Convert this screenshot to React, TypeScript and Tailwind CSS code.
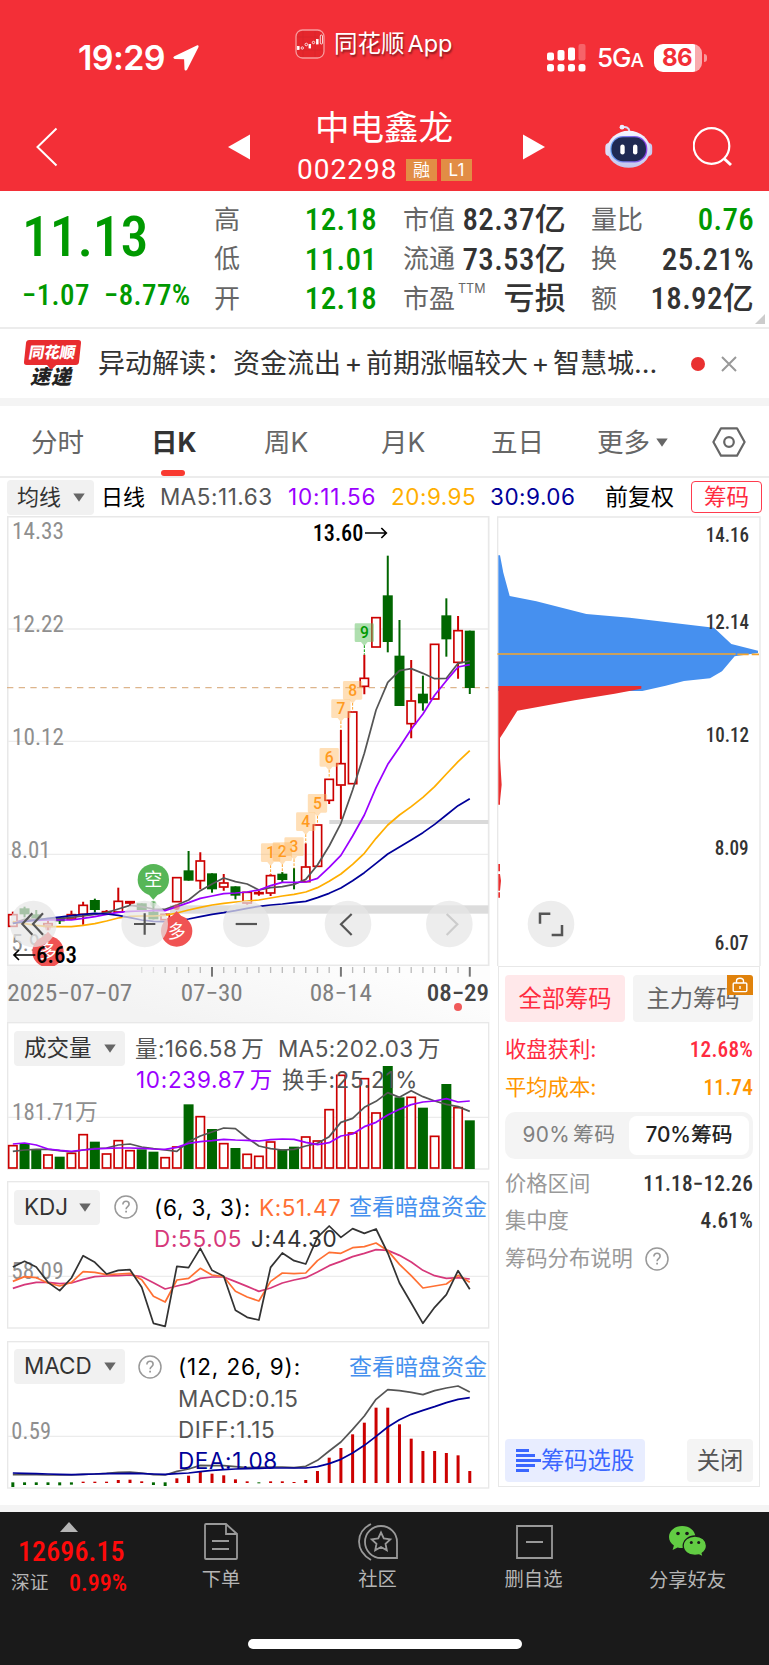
import React from 'react';
import clsx from 'clsx';

const UI = "[font-family:Inter,'Noto_Sans_CJK_SC',sans-serif]";
const DIN = "[font-family:Roboto,'Noto_Sans_CJK_SC',sans-serif] [font-stretch:75%]";
const DIN_SVG = "Roboto, 'Noto Sans CJK SC', sans-serif";

const RED = '#cc0000';
const GREEN = '#006600';

// x of the n-th trading day, in chart units (3 units = 1px)
const dayX = (i: number) => 38.5 + i * 35.15;

// [rising, body top, body bottom, high, low]
type Candle = [boolean, number, number, number, number];

const candles: Candle[] = [
  [true, 1213, 1250, 1205, 1250],
  [false, 1195, 1213, 1190, 1222],
  [false, 1213, 1225, 1200, 1232],
  [true, 1240, 1250, 1232, 1260],
  [false, 1222, 1234, 1222, 1242],
  [true, 1213, 1228, 1202, 1228],
  [true, 1185, 1214, 1175, 1244],
  [false, 1170, 1200, 1166, 1207],
  [true, 1204, 1208, 1200, 1208],
  [true, 1173, 1207, 1133, 1207],
  [true, 1174, 1180, 1174, 1187],
  [false, 1180, 1200, 1180, 1200],
  [false, 1205, 1228, 1175, 1228],
  [true, 1212, 1230, 1212, 1230],
  [true, 1102, 1176, 1102, 1176],
  [false, 1081, 1112, 1023, 1112],
  [true, 1052, 1113, 1027, 1138],
  [false, 1090, 1138, 1090, 1148],
  [true, 1118, 1132, 1092, 1142],
  [false, 1129, 1157, 1129, 1168],
  [true, 1146, 1180, 1146, 1184],
  [true, 1147, 1152, 1143, 1157],
  [true, 1096, 1150, 1092, 1158],
  [false, 1091, 1110, 1086, 1118],
  [false, 1103, 1105, 1074, 1138],
  [true, 1070, 1116, 1000, 1116],
  [true, 944, 1070, 944, 1070],
  [true, 807, 872, 807, 882],
  [true, 760, 826, 660, 928],
  [true, 605, 822, 605, 822],
  [true, 504, 530, 434, 553],
  [true, 322, 412, 322, 412],
  [false, 256, 396, 137, 427],
  [false, 437, 588, 330, 588],
  [true, 572, 642, 450, 685],
  [false, 551, 580, 497, 602],
  [true, 402, 568, 402, 568],
  [false, 316, 388, 265, 440],
  [true, 361, 458, 318, 506],
  [false, 362, 534, 362, 552],
];

const ma5 = [1240, 1228, 1228, 1228, 1226, 1222, 1218, 1213, 1208, 1197, 1186, 1190, 1197, 1198, 1185, 1170, 1142, 1122, 1104, 1115, 1122, 1140, 1133, 1130, 1123, 1108, 1065, 1008, 940, 840, 730, 600, 517, 482, 476, 490, 506, 505, 460, 453];
const ma10 = [1236, 1233, 1231, 1230, 1230, 1230, 1225, 1220, 1213, 1207, 1204, 1203, 1202, 1202, 1190, 1178, 1165, 1158, 1151, 1149, 1146, 1140, 1127, 1117, 1117, 1116, 1105, 1072, 1036, 978, 915, 833, 763, 712, 658, 612, 556, 512, 471, 464];
const ma20 = [1235, 1241, 1246, 1250, 1250, 1250, 1246, 1241, 1233, 1224, 1219, 1218, 1218, 1216, 1209, 1200, 1192, 1185, 1180, 1176, 1173, 1170, 1164, 1158, 1153, 1146, 1133, 1114, 1092, 1063, 1030, 985, 945, 915, 890, 862, 830, 792, 755, 722];
const ma30 = [1240, 1235, 1230, 1225, 1221, 1217, 1213, 1210, 1212, 1216, 1223, 1230, 1234, 1235, 1232, 1227, 1220, 1213, 1208, 1202, 1195, 1189, 1185, 1182, 1178, 1174, 1163, 1150, 1134, 1112, 1088, 1060, 1032, 1011, 990, 968, 943, 915, 887, 866];

const volume = [405, 400, 420, 433, 440, 428, 372, 395, 430, 390, 420, 418, 425, 441, 409, 283, 318, 357, 399, 414, 431, 437, 394, 418, 410, 379, 391, 297, 194, 367, 204, 307, 168, 262, 260, 293, 377, 222, 291, 331];
const vol5 = [424, 420, 418, 418, 422, 426, 420, 415, 414, 405, 402, 411, 416, 420, 424, 395, 378, 366, 354, 356, 384, 408, 416, 420, 418, 408, 400, 380, 337, 325, 292, 274, 248, 262, 242, 260, 273, 283, 290, 304];
const vol10 = [402, 399, 405, 417, 421, 424, 420, 417, 415, 414, 414, 415, 417, 418, 412, 400, 395, 392, 388, 390, 391, 393, 389, 387, 388, 397, 404, 398, 378, 372, 350, 337, 315, 298, 284, 276, 273, 266, 276, 273];

const kLine = [815, 801, 804, 820, 829, 818, 786, 788, 795, 793, 791, 810, 860, 877, 811, 806, 776, 796, 801, 845, 862, 874, 815, 790, 792, 790, 753, 728, 731, 714, 711, 700, 723, 764, 798, 835, 829, 823, 797, 818];
const dLine = [836, 825, 818, 818, 822, 820, 809, 801, 799, 798, 796, 801, 819, 838, 829, 821, 806, 802, 802, 816, 830, 845, 835, 820, 811, 804, 787, 768, 755, 741, 731, 720, 722, 737, 757, 782, 798, 806, 804, 808];
const jLine = [772, 755, 772, 818, 843, 805, 738, 758, 793, 782, 780, 833, 941, 950, 770, 774, 716, 782, 800, 902, 923, 931, 773, 730, 753, 763, 683, 649, 683, 657, 671, 658, 730, 820, 880, 941, 893, 855, 783, 839];

const diff = [1393, 1393, 1393, 1394, 1394, 1394, 1392, 1391, 1389, 1386, 1385, 1388, 1393, 1394, 1383, 1376, 1365, 1366, 1366, 1369, 1372, 1371, 1370, 1370, 1372, 1368, 1350, 1322, 1295, 1257, 1217, 1167, 1138, 1141, 1146, 1153, 1141, 1133, 1127, 1145];
const dea = [1388, 1389, 1390, 1391, 1392, 1393, 1392, 1391, 1390, 1390, 1389, 1390, 1391, 1392, 1390, 1388, 1384, 1380, 1378, 1376, 1375, 1374, 1373, 1373, 1373, 1373, 1369, 1360, 1347, 1328, 1305, 1278, 1250, 1228, 1212, 1200, 1189, 1177, 1167, 1162];
// height above the zero line, negative goes below
const macdBars = [-14, -8, -8, -8, -9, -7, 4, 4, 4, 9, 10, 5, -8, -11, 14, 22, 33, 28, 23, 11, 5, -3, 5, 5, 3, 9, 36, 76, 105, 146, 181, 226, 226, 176, 133, 96, 96, 90, 83, 36];

const points = (ys: number[]) => ys.map((y, i) => `${dayX(i)},${y}`).join(' ');

const Line = ({ ys, color }: { ys: number[]; color: string }) => (
  <polyline points={points(ys)} fill="none" stroke={color} strokeWidth={5.2} strokeLinejoin="round" />
);

const tags = [
  { n: 1, day: 22, y: 1000, end: 1094 },
  { n: 2, day: 23, y: 997, end: 1088 },
  { n: 3, day: 24, y: 982, end: 1076 },
  { n: 4, day: 25, y: 907, end: 1000 },
  { n: 5, day: 26, y: 852, end: 942 },
  { n: 6, day: 27, y: 714, end: 806 },
  { n: 7, day: 28, y: 568, end: 660 },
  { n: 8, day: 29, y: 513, end: 604 },
  { n: 9, day: 30, y: 340, end: 434 },
];

const AxisLabel = ({ x, y, w, children, fill = '#8f8f8f', weight = 400, size = 69 }: { x: number; y: number; w: number; children: string; fill?: string; weight?: number; size?: number }) => (
  <text x={x} y={y} textLength={w} lengthAdjust="spacingAndGlyphs" fontSize={size} fontWeight={weight} fontStretch="75%" fill={fill} fontFamily={DIN_SVG}>
    {children}
  </text>
);

const Caret = ({ className }: { className?: string }) => (
  <svg viewBox="0 0 12 9" className={clsx('h-[9px] w-3', className)}>
    <path d="M0.3 0.5h11.4L6 8.7z" fill="#666" />
  </svg>
);

const Help = () => (
  <svg viewBox="0 0 24 24" className="h-6 w-6 shrink-0" fill="none" stroke="#999">
    <circle cx="12" cy="12" r="11" strokeWidth="1.5" />
    <path d="M8.9 9.4c0-1.9 1.3-3.1 3.1-3.1s3.1 1.2 3.1 2.9c0 2.3-3 2.4-3 5" strokeWidth="1.6" />
    <path d="M12.1 15.8v1.8" strokeWidth="1.8" />
  </svg>
);

const StatusBar = () => (
  <div className="flex h-[84px] text-white">
    <div className="flex w-[295px] items-center pt-[31px] pl-[78px]">
      <span className="w-[95px] text-[34px] leading-none font-semibold tracking-[-0.6px]">19:29</span>
      <svg viewBox="0 0 26 26" className="h-[26px] w-[26px]">
        <path d="M23.8.4 1.4 11.2c-1.7.9-1.2 2.6.5 2.7l9.2.3.4 9.7c.1 1.900 2 2 2.700.5L25.300 2.600C26.100.9 25.200-.2 23.800.4z" fill="#fff" />
      </svg>
    </div>
    <div className="flex w-[252px] items-center pt-1">
      <svg viewBox="0 0 30 30" className="h-[30px] w-[30px]">
        <rect x="1" y="1" width="28" height="28" rx="6.5" fill="#e5262c" stroke="#f79a9c" strokeWidth="1.3" />
        <path d="M2 8h26M2 21h26M8 2v26M20 2v26" stroke="#d5262c" strokeWidth=".6" />
        <g fill="#fff" stroke="#fff" strokeWidth=".8">
          <rect x="2.3" y="17.5" width="1.8" height="3" />
          <circle cx="7.3" cy="19" r="1.2" fill="none" />
          <circle cx="11.3" cy="15.5" r="1.3" fill="none" />
          <rect x="14" y="15.5" width="1.6" height="3.5" />
          <circle cx="18.5" cy="13.5" r="1.2" fill="none" />
          <rect x="21.5" y="10.5" width="1.6" height="4.5" />
          <rect x="25.3" y="6" width="2.2" height="9" rx="1" fill="none" />
        </g>
      </svg>
      <span className="ml-[9px] text-[23.5px] leading-none whitespace-nowrap [text-shadow:1px_2px_2px_rgba(0,0,0,0.45)]">
        同花顺<span className="ml-[3px]">App</span>
      </span>
    </div>
    <div className="flex items-center pt-[31px]">
      <svg viewBox="0 0 39 28" className="h-7 w-[39px]" fill="#fff">
        <rect x="0" y="8.5" width="7" height="8" rx="2" />
        <rect x="10.5" y="6" width="7" height="10.5" rx="2" />
        <rect x="21" y="3.5" width="7" height="13" rx="2" />
        <rect x="31.5" y="0" width="7" height="16.5" rx="2" opacity=".25" />
        {[0, 10.5, 21, 31.5].map((x) => (
          <rect key={x} x={x} y="20" width="7" height="7.5" rx="2.5" />
        ))}
      </svg>
      <span className="ml-[11px] w-[57px] pt-[1px] text-[26px] leading-none font-medium tracking-[-1px]">
        5G<span className="text-[19px]">A</span>
      </span>
      <div className="flex h-7 w-[48px] items-center justify-center rounded-[9px] bg-[linear-gradient(90deg,#fff_86%,#f9aaae_86%)]">
        <span className="pr-0.5 text-[24px] leading-none font-bold tracking-[-0.5px] text-[#f22f37]">86</span>
      </div>
      <div className="ml-[1.5px] h-2 w-[3px] rounded-r-full bg-[#f9979b]" />
    </div>
  </div>
);

const Robot = () => (
  <svg viewBox="0 0 48 46" className="h-[46px] w-12">
    <defs>
      <linearGradient id="shell" x1="0" y1="0" x2="0" y2="1">
        <stop offset="0" stopColor="#f4f5ff" />
        <stop offset="1" stopColor="#c3c6ee" />
      </linearGradient>
      <linearGradient id="visor" x1="0" y1="0" x2="1" y2="0">
        <stop offset="0" stopColor="#6aa5f5" />
        <stop offset="1" stopColor="#8b3fe6" />
      </linearGradient>
    </defs>
    <path d="M18 4.200c3-.6 6 .3 6.500 4.300" fill="none" stroke="#dadcf7" strokeWidth="2" />
    <circle cx="17" cy="4.200" r="2.400" fill="#eceeff" />
    <rect x="0.300" y="20" width="8" height="13" rx="4" fill="#dcdef8" />
    <rect x="39.200" y="20" width="8" height="13" rx="4" fill="#c9cbf1" />
    <ellipse cx="23.700" cy="26.300" rx="21.500" ry="18.500" fill="url(#shell)" />
    <rect x="5.300" y="13" width="37" height="26.500" rx="12.500" fill="url(#visor)" />
    <rect x="6.500" y="14.200" width="34.500" height="24" rx="11.500" fill="#1f2a52" />
    <rect x="15.300" y="21.500" width="4.400" height="10" rx="2.200" fill="#fff" />
    <rect x="28" y="21.500" width="4.400" height="10" rx="2.200" fill="#fff" />
  </svg>
);

const TitleBar = () => (
  <div className="flex h-[107px] items-start text-white">
    <svg viewBox="0 0 22 40" className="mt-[43px] ml-9 h-10 w-[22px]" fill="none" stroke="#fff" strokeWidth="2">
      <path d="M20.5 1.5 1.5 20l19 18.5" />
    </svg>
    <svg viewBox="0 0 22 26" className="mt-[50px] ml-[170px] h-[26px] w-[22px]">
      <path d="M22 .5v25L0 13z" fill="#fff" />
    </svg>
    <div className="mt-[26px] ml-[47px] w-[176px]">
      <h1 className="pl-[18px] text-[34.5px] leading-9 whitespace-nowrap">中电鑫龙</h1>
      <div className="mt-[13px] flex items-center">
        <span className="w-[109px] [font-family:Roboto,sans-serif] text-[28px] leading-[22px] tracking-[1px]">002298</span>
        <span className="flex h-[22px] w-[31px] items-center justify-center bg-[#e28d45] text-[17px] leading-none">融</span>
        <span className="ml-1 flex h-[22px] w-[31px] items-center justify-center bg-[#e28d45] text-[17px] leading-none">L1</span>
      </div>
    </div>
    <svg viewBox="0 0 22 26" className="mt-[50px] ml-[50px] h-[26px] w-[22px]">
      <path d="M0 .5v25L22 13z" fill="#fff" />
    </svg>
    <div className="mt-[39px] ml-[60px]">
      <Robot />
    </div>
    <svg viewBox="0 0 40 40" className="mt-[43px] ml-[40px] h-10 w-10" fill="none" stroke="#fff">
      <circle cx="18.5" cy="19" r="17.8" strokeWidth="2.2" />
      <path d="m31 31.500 7 6.500" strokeWidth="3" />
    </svg>
  </div>
);

const Stat = ({ label, value, green, sup }: { label: string; value: string; green?: boolean; sup?: string }) => (
  <div className="flex h-[39.5px] items-center justify-between whitespace-nowrap">
    <span className="flex text-[26px] leading-none text-[#666]">
      {label}
      {sup && <sup className="top-0 mt-[-3px] ml-[3px] text-[12.5px] leading-none">{sup}</sup>}
    </span>
    <span className={clsx('text-[31px] leading-none font-medium tracking-[0.3px]', DIN, green ? 'text-[#009900]' : 'text-[#333]')}>{value}</span>
  </div>
);

const Quote = () => (
  <section className="relative flex h-[138px] border-b-2 border-[#ececec] bg-white">
    <div className={`w-[214px] pt-[17px] pl-[22px] text-[#009900] ${DIN}`}>
      <div className="text-[56px] leading-[58px] font-medium tracking-[-0.3px]">11.13</div>
      <div className="mt-[15px] flex text-[29px] leading-[28px] font-medium tracking-[0.4px]">
        <span className="w-[82px]">−1.07</span>
        <span>−8.77%</span>
      </div>
    </div>
    <div className="w-[163px] pt-[9px]">
      <Stat label="高" value="12.18" green />
      <Stat label="低" value="11.01" green />
      <Stat label="开" value="12.18" green />
    </div>
    <div className="ml-[26px] w-[163px] pt-[9px]">
      <Stat label="市值" value="82.37亿" />
      <Stat label="流通" value="73.53亿" />
      <Stat label="市盈" value="亏损" sup="TTM" />
    </div>
    <div className="ml-[25px] w-[163px] pt-[9px]">
      <Stat label="量比" value="0.76" green />
      <Stat label="换" value="25.21%" />
      <Stat label="额" value="18.92亿" />
    </div>
    <svg viewBox="0 0 10 10" className="absolute right-1 bottom-[3px] h-2.5 w-2.5">
      <path d="M10 0v10H0z" fill="#ccc" />
    </svg>
  </section>
);

const Plus = () => <span className="inline-block w-[25px] text-center">+</span>;

const News = () => (
  <section className="flex h-[77px] items-center border-b-8 border-[#f4f4f4] bg-white">
    <div className="ml-6 flex w-[74px] flex-col items-start">
      <div className="relative ml-[1px] flex h-[25px] w-[55px] -skew-x-6 items-center justify-center rounded-[3px] bg-[#e82c2f]">
        <span className="[transform:skewX(-4deg)] text-[15.5px] leading-none font-black whitespace-nowrap text-white">同花顺</span>
        <span className="absolute -bottom-[3px] left-[24px] h-2 w-2 rotate-45 bg-[#e82c2f]" />
      </div>
      <span className="mt-[2px] ml-[6px] text-[20px] leading-[21px] font-black tracking-[1px] text-[#222] italic">速递</span>
    </div>
    <p className="w-[586px] text-[27px] leading-none whitespace-nowrap text-[#333]">
      异动解读：资金流出
      <Plus />
      前期涨幅较大
      <Plus />
      智慧城...
    </p>
    <span className="ml-[7px] h-3.5 w-3.5 rounded-full bg-[#e93030]" />
    <svg viewBox="0 0 16 16" className="ml-4 h-4 w-4" stroke="#999" strokeWidth="2">
      <path d="m1 1 14 14M15 1 1 15" />
    </svg>
  </section>
);

const Tabs = () => (
  <nav className="flex h-[72px] items-center border-b-2 border-[#ececec] bg-white pt-[2px] text-[26.5px] leading-none whitespace-nowrap text-[#666]">
    <span className="ml-[31px] w-[120px]">分时</span>
    <span className="relative flex h-full w-[113px] items-center font-bold text-[#333]">
      日K
      <i className="absolute bottom-0 left-[10px] h-[6px] w-6 rounded-[3px] bg-[#f93a30]" />
    </span>
    <span className="w-[117px]">周K</span>
    <span className="w-[110px]">月K</span>
    <span className="w-[106px]">五日</span>
    <span className="w-[59px]">更多</span>
    <Caret />
    <svg viewBox="0 0 34 30" className="ml-[44px] h-[30px] w-[34px]" fill="none" stroke="#666" strokeWidth="2.2">
      <path d="M9 1.300h16L32.600 15 25 28.700H9L1.400 15z" strokeLinejoin="round" />
      <circle cx="17" cy="15" r="4.8" />
    </svg>
  </nav>
);

const MaRow = () => (
  <div className="flex h-[38px] items-center bg-white pl-[7px] text-[22.5px] leading-none whitespace-nowrap">
    <span className="flex h-[35px] w-[87px] items-center justify-between rounded-[4px] bg-[#f1f1f1] pr-[9px] pl-[10px] text-[22px] text-[#333]">
      均线
      <Caret />
    </span>
    <span className="ml-[7px] w-[59px] text-[22px] text-black">日线</span>
    <span className="w-[128px] tracking-[0.5px] text-[#555]">MA5:11.63</span>
    <span className="w-[103px] tracking-[0.8px] text-[#9b00ff]">10:11.56</span>
    <span className="w-[99px] tracking-[0.5px] text-[#ffae00]">20:9.95</span>
    <span className="w-[115px] tracking-[0.5px] text-[#000099]">30:9.06</span>
    <span className="w-[86px] text-[23px] text-black">前复权</span>
    <span className="flex h-8 w-[71px] items-center justify-center rounded-[4px] border-[1.5px] border-[#ff3b4e] text-[22.5px] text-[#ff2b40]">筹码</span>
  </div>
);

const Pin = ({ x, y, color, down, label }: { x: number; y: number; color: string; down?: boolean; label: string }) => (
  <g>
    <circle cx={x} cy={y} r={47} fill={color} />
    <path d={down ? `M${x - 20} ${y + 38}h40l-20 22z` : `M${x - 20} ${y - 38}h40l-20 -22z`} fill={color} />
    <circle cx={x} cy={down ? y + 72 : y - 72} r={9} fill={color} opacity={0.5} />
    <text x={x} y={y + 20} textAnchor="middle" fontSize={54} fill="#fff" fontFamily="'Noto Sans CJK SC', sans-serif">
      {label}
    </text>
  </g>
);

const buttons = [
  { x: 100, icon: 'M97 1210l-30 32 30 32M129 1210l-30 32 30 32', stroke: '#555' },
  { x: 434, icon: 'M402 1242h64M434 1210v64', stroke: '#555' },
  { x: 739, icon: 'M707 1242h64', stroke: '#555' },
  { x: 1044, icon: 'M1055 1212l-32 31 32 32', stroke: '#555' },
  { x: 1348, icon: 'M1340 1212l32 31-32 32', stroke: '#ccc' },
];

const KLineChart = () => (
  <svg viewBox="21 18 1449 1350" className="h-[450px] w-[483px]">
    <rect x={23} y={20} width={1443} height={1346} fill="#fff" stroke="#e8e8e8" strokeWidth={5} />
    <path d="M24 357H1464M24 694H1464M24 1033H1464" stroke="#ececec" strokeWidth={4} />
    <rect x={988} y={930} width={477} height={12} fill="#d9d9d9" />
    <rect x={510} y={1186} width={955} height={25} fill="#dcdcdc" />
    <AxisLabel x={36} y={88} w={156}>14.33</AxisLabel>
    <AxisLabel x={36} y={367} w={156}>12.22</AxisLabel>
    <AxisLabel x={36} y={705} w={156}>10.12</AxisLabel>
    <AxisLabel x={32} y={1043} w={120}>8.01</AxisLabel>
    <AxisLabel x={34} y={1323} w={120}>5.90</AxisLabel>
    <path d="M21 533H1466" stroke="#ddb58c" strokeWidth={3.5} strokeDasharray="19 16" />
    {candles.map(([up, top, bottom, high, low], i) => {
      const x = dayX(i);
      return up ? (
        <g key={i} stroke={RED} strokeWidth={5}>
          <path d={`M${x} ${high}V${top}M${x} ${bottom}V${low}`} strokeWidth={6} />
          <rect x={x - 12.5} y={top + 1} width={25} height={Math.max(bottom - top - 2, 1)} fill="#fff" />
        </g>
      ) : (
        <g key={i} fill={GREEN}>
          <rect x={x - 3} y={high} width={6} height={low - high} />
          {bottom - top > 5 && <rect x={x - 15} y={top} width={30} height={bottom - top} />}
        </g>
      );
    })}
    <Line ys={ma5} color="#555" />
    <Line ys={ma10} color="#9b00ff" />
    <Line ys={ma20} color="#ffae00" />
    <Line ys={ma30} color="#000099" />
    {tags.map(({ n, day, y, end }) => {
      const x = dayX(day);
      const green = n === 9;
      return (
        <g key={n}>
          <path d={`M${x - 25} ${y}h50q4 0 4 4v48q0 4 -4 4h-15l-10 12l-10 -12h-15q-4 0 -4 -4v-48q0 -4 4 -4z`} fill={green ? '#5fbf5f' : '#ffb860'} opacity={green ? 0.5 : 0.45} />
          <path d={`M${x} ${y + 66}V${end}`} stroke={green ? '#009900' : '#ffa530'} strokeWidth={3} strokeDasharray="8 4" />
          <text x={x} y={y + 45} textAnchor="middle" fontSize={47} fontWeight={500} fill={green ? '#009900' : '#ff9a1f'} fontFamily={DIN_SVG}>
            {n}
          </text>
        </g>
      );
    })}
    <Pin x={460} y={1109} color="#57b657" down label="空" />
    <Pin x={530} y={1263} color="#f05353" label="多" />
    <Pin x={144} y={1325} color="#f05353" label="多" />
    {buttons.map(({ x, icon, stroke }) => (
      <g key={x}>
        <circle cx={x} cy={1242} r={70} fill="#e6e6e6" opacity={0.72} />
        <path d={icon} fill="none" stroke={stroke} strokeWidth={6.5} />
      </g>
    ))}
    <AxisLabel x={938} y={93} w={152} fill="#000" weight={500}>13.60</AxisLabel>
    <path d="M1095 69h64M1144 54l15 15-15 15" fill="none" stroke="#000" strokeWidth={5} />
    <path d="M106 1335H42M57 1320l-15 15 15 15" fill="none" stroke="#000" strokeWidth={5} />
    <AxisLabel x={108} y={1360} w={123} fill="#000" weight={500}>6.63</AxisLabel>
  </svg>
);

const DateAxis = () => (
  <svg viewBox="21 1368 1449 168" className="h-14 w-[483px]">
    <defs>
      <linearGradient id="axis" x1="0" y1="1" x2="1" y2="0.6">
        <stop offset="0.3" stopColor="#f3f3f3" />
        <stop offset="1" stopColor="#fdfdfd" />
      </linearGradient>
    </defs>
    <rect x={21} y={1368} width={1449} height={168} fill="url(#axis)" />
    {Array.from({ length: 29 }, (_, k) => k + 11).map((i) => {
      const major = i === 17 || i === 28 || i === 39;
      return <path key={i} d={`M${dayX(i)} 1371V${major ? 1400 : 1389}`} stroke={major ? '#777' : i < 13 ? '#ddd' : '#bbb'} strokeWidth={major ? 6 : 4} />;
    })}
    <AxisLabel x={22} y={1474} w={375} fill="#808080">2025−07−07</AxisLabel>
    <AxisLabel x={542} y={1474} w={186} fill="#808080">07−30</AxisLabel>
    <AxisLabel x={929} y={1474} w={187} fill="#808080">08−14</AxisLabel>
    <AxisLabel x={1280} y={1474} w={187} fill="#444" weight={500}>08−29</AxisLabel>
    <circle cx={1374} cy={1491} r={12} fill="#f05a5a" />
  </svg>
);

const Picker = ({ children, className }: { children: string; className: string }) => (
  <span className={clsx('flex h-[35px] shrink-0 items-center justify-between rounded-[4px] bg-[#f1f1f1] pr-[9px] pl-[10px] text-[22.5px] tracking-normal text-[#333]', className)}>
    {children}
    <Caret />
  </span>
);

const VolumePanel = () => (
  <div className="relative h-[148px] w-[483px] text-[22.5px] leading-none tracking-[0.4px] whitespace-nowrap text-[#555]">
    <svg viewBox="21 36 1449 444" className="absolute inset-0 h-full w-full">
      <rect x={23} y={38} width={1443} height={439} fill="#fff" stroke="#e8e8e8" strokeWidth={4} />
      <path d="M24 322H1464" stroke="#ececec" strokeWidth={4} />
      {volume.map((y, i) =>
        candles[i][0] ? (
          <rect key={i} x={dayX(i) - 12.5} y={y + 2} width={25} height={472 - y} fill="#fff" stroke={RED} strokeWidth={5} />
        ) : (
          <rect key={i} x={dayX(i) - 15} y={y} width={30} height={477 - y} fill={GREEN} />
        ),
      )}
      <Line ys={vol5} color="#555" />
      <Line ys={vol10} color="#9b00ff" />
      <AxisLabel x={36} y={331} w={258}>181.71万</AxisLabel>
    </svg>
    <div className="relative flex h-[31px] items-center pt-[21px] pl-[7px]">
      <Picker className="w-[111px]">成交量</Picker>
      <span className="ml-[10px] w-[143px] pt-[2px]">量:166.58<span className="ml-1">万</span></span>
      <span className="pt-[2px]">MA5:202.03<span className="ml-1">万</span></span>
    </div>
    <div className="relative mt-[12px] flex h-[31px] items-center pl-[129px]">
      <span className="w-[146px] tracking-[0.7px] text-[#9b00ff]">10:239.87<span className="ml-1">万</span></span>
      <span className="tracking-[0.7px]">换手:25.21%</span>
    </div>
  </div>
);

const KdjPanel = () => (
  <div className="relative h-[148px] w-[483px] text-[22.5px] leading-none tracking-[0.4px] whitespace-nowrap text-[#555]">
    <svg viewBox="21 514 1449 444" className="absolute inset-0 h-full w-full">
      <rect x={23} y={516} width={1443} height={439} fill="#fff" stroke="#e8e8e8" strokeWidth={4} />
      <path d="M24 800H1464" stroke="#ececec" strokeWidth={4} />
      <AxisLabel x={34} y={809} w={157}>58.09</AxisLabel>
      <Line ys={dLine} color="#d6387a" />
      <Line ys={kLine} color="#ff7033" />
      <Line ys={jLine} color="#333" />
    </svg>
    <div className="relative flex h-[31px] items-center pt-[21px] pl-[7px]">
      <Picker className="w-[86px]">KDJ</Picker>
      <span className="ml-[14px] w-[40px]"><Help /></span>
      <span className="w-[105px] pt-[1px] tracking-[0.8px] text-black">(6, 3, 3):</span>
      <span className="w-[90px] pt-[1px] tracking-[0.6px] text-[#ff7033]">K:51.47</span>
      <span className="pt-[1px] text-[23px] tracking-normal text-[#4590ee]">查看暗盘资金</span>
    </div>
    <div className="relative mt-[11px] flex h-[31px] items-center pl-[147px]">
      <span className="w-[97px] tracking-[0.7px] text-[#d6387a]">D:55.05</span>
      <span className="tracking-[0.7px] text-[#333]">J:44.30</span>
    </div>
  </div>
);

const MacdPanel = () => (
  <div className="relative h-[148px] w-[483px] text-[22.5px] leading-none tracking-[0.6px] whitespace-nowrap text-[#555]">
    <svg viewBox="21 992 1449 444" className="absolute inset-0 h-full w-full">
      <rect x={23} y={994} width={1443} height={439} fill="#fff" stroke="#e8e8e8" strokeWidth={4} />
      <path d="M24 1278H1464" stroke="#ececec" strokeWidth={4} />
      {macdBars.map((h, i) => (
        <rect key={i} x={dayX(i) - 4.5} y={h > 0 ? 1418 - h : 1416} width={9} height={Math.abs(h)} fill={h > 0 ? RED : GREEN} />
      ))}
      <Line ys={diff} color="#555" />
      <Line ys={dea} color="#000099" />
      <AxisLabel x={34} y={1287} w={120}>0.59</AxisLabel>
    </svg>
    <div className="relative flex h-[31px] items-center pt-[21px] pl-[7px]">
      <Picker className="w-[111px]">MACD</Picker>
      <span className="ml-[13px] w-[40px]"><Help /></span>
      <span className="w-[171px] pt-[1px] tracking-[0.9px] text-black">(12, 26, 9):</span>
      <span className="pt-[1px] text-[23px] tracking-normal text-[#4590ee]">查看暗盘资金</span>
    </div>
    <div className="relative mt-[11px] pl-[171px] leading-[31.3px]">
      <div>MACD:0.15</div>
      <div>DIFF:1.15</div>
      <div className="text-[#000099]">DEA:1.08</div>
    </div>
  </div>
);

const ChipChart = () => (
  <svg viewBox="36 18 792 1350" className="h-[450px] w-[264px]">
    <path d="M38 1369V21H825V1369" fill="#fff" stroke="#e8e8e8" strokeWidth={4} />
    <path d="M40 136h5l10 52 19 70 80 16 150 38 130 11 253 30 52 49 80 20v7l-70 10-38 45-36 21-78 8-55 14-70 16H40z" fill="#4690ef" />
    <path d="M40 528H469v8l-80 15-120 20-172 31-34 54-18 28v60l5 80-5 50v10h-5zM40 1062h5v22h-5zM40 1092h5l3 20-3 30h-5zM40 1147h5v16h-5z" fill="#e83030" />
    <path d="M37 432H752M757 433h34M800 433h22" stroke="#f5a52c" strokeWidth={5} />
    <AxisLabel x={662} y={97} w={130} size={58} weight={500} fill="#333">14.16</AxisLabel>
    <AxisLabel x={662} y={358} w={130} size={58} weight={500} fill="#333">12.14</AxisLabel>
    <AxisLabel x={662} y={696} w={130} size={58} weight={500} fill="#333">10.12</AxisLabel>
    <AxisLabel x={689} y={1034} w={102} size={58} weight={500} fill="#333">8.09</AxisLabel>
    <AxisLabel x={689} y={1319} w={102} size={58} weight={500} fill="#333">6.07</AxisLabel>
    <circle cx={198} cy={1242} r={70} fill="#ededed" />
    <path d="M165 1241v-30h31M200 1275h31v-30" fill="none" stroke="#555" strokeWidth={7.5} />
  </svg>
);

const ChipRow = ({ label, value, color, valueColor }: { label: string; value: string; color: string; valueColor: string }) => (
  <div className={clsx('flex h-[37.7px] items-center justify-between text-[21.3px]', color)}>
    <span>{label}</span>
    <span className={clsx('font-medium tracking-[0.2px]', DIN, valueColor)}>{value}</span>
  </div>
);

const ChipPanel = () => (
  <aside className="ml-[7px] flex h-[971px] w-[264px] flex-col">
    <ChipChart />
    <div className="ml-[1px] flex w-[262px] flex-1 flex-col border border-[#e8e8e8] pt-[8px] pr-[6px] pb-1 pl-[6px] leading-none whitespace-nowrap">
      <div className="flex justify-between text-[23.3px]">
        <span className="flex h-[47px] w-[120px] items-center justify-center rounded-[4px] bg-[#ffe8ea] text-[#ff2b40]">全部筹码</span>
        <span className="relative flex h-[47px] w-[120px] items-center justify-center rounded-[4px] bg-[#f4f4f4] text-[#666]">
          主力筹码
          <span className="absolute top-0 right-0 flex h-5 w-[26px] items-center justify-center rounded-tr-[3px] bg-[#e0820c]">
            <svg viewBox="0 0 16 16" className="h-4 w-4" fill="none" stroke="#fff" strokeWidth="1.4">
              <rect x="1.2" y="6" width="13.6" height="8.600" rx="1" />
              <path d="M4.5 6V4q0-2.800 3.500-2.800T11.500 4v2M8 9v3" />
            </svg>
          </span>
        </span>
      </div>
      <div className="mt-[9px]">
        <ChipRow label="收盘获利:" value="12.68%" color="text-[#ff2b40]" valueColor="text-[#ff2b40]" />
        <ChipRow label="平均成本:" value="11.74" color="text-[#ff9500]" valueColor="text-[#ff9500]" />
      </div>
      <div className="mt-[6px] flex h-[47px] items-center rounded-[10px] bg-[#f4f4f4] p-1 text-[20.8px]">
        <span className="w-[120px] text-center tracking-[0.4px] text-[#808080]">
          90%<span className="ml-[3px]">筹码</span>
        </span>
        <span className="flex h-[39px] w-[120px] items-center justify-center rounded-[8px] bg-white font-medium text-[#222]">70%筹码</span>
      </div>
      <div className="mt-[5px]">
        <ChipRow label="价格区间" value="11.18−12.26" color="text-[#999]" valueColor="text-[#333]" />
        <ChipRow label="集中度" value="4.61%" color="text-[#999]" valueColor="text-[#333]" />
        <div className="flex h-[37.7px] items-center gap-3 text-[21.3px] text-[#999]">
          筹码分布说明
          <Help />
        </div>
      </div>
      <div className="mt-auto flex justify-between text-[23.3px]">
        <span className="flex h-[43px] w-[140px] items-center rounded-[4px] bg-[#e8edff] pl-[11px] text-[#3a66ff]">
          <svg viewBox="0 0 25 23" className="h-[23px] w-[25px]" fill="#3a66ff">
            <path d="M0 0h13v3H0zM0 5h19v3H0zM0 10h25v3H0zM0 15h19v3H0zM0 20h13v3H0z" />
          </svg>
          筹码选股
        </span>
        <span className="flex h-[43px] w-[66px] items-center justify-center rounded-[4px] bg-[#f4f4f4] text-[#555]">关闭</span>
      </div>
    </div>
  </aside>
);

const navItems = [
  {
    label: '下单',
    width: 'w-[144px]',
    icon: <path d="M24 1H4a1 1 0 0 0-1 1v33a1 1 0 0 0 1 1h30a1 1 0 0 0 1-1V11zM24 1v10h11M10 18h17M10 26h17" />,
  },
  {
    label: '社区',
    width: 'w-[169px]',
    icon: <path d="M22 3a16 16 0 1 0 0 32h16V19A16 16 0 0 0 22 3zM12 1Q0 7 0 18.500T12 37M22 9.500l2.800 6 6.500.8-4.800 4.500 1.300 6.500-5.800-3.300-5.800 3.300 1.300-6.500-4.800-4.500 6.500-.8z" />,
  },
  {
    label: '删自选',
    width: 'w-[143px]',
    icon: <path d="M2 3h35v32H2zM11 19h17" />,
  },
];

const BottomBar = () => (
  <footer className="flex h-[153px] flex-col bg-[#1a1a1a]">
    <div className="flex whitespace-nowrap">
      <div className={`w-[149px] pt-[10px] leading-none text-[#ff0a0a] ${DIN}`}>
        <svg viewBox="0 0 18 10" className="ml-[60px] h-2.5 w-[18px]">
          <path d="M9 0l9 10H0z" fill="#b5b5b5" />
        </svg>
        <div className="mt-[6px] ml-[18px] text-[28px] leading-[28px] font-medium tracking-[0.1px]">12696.15</div>
        <div className="mt-[5px] ml-[11px] flex items-center text-[24px] font-medium">
          <span className="w-[58px] text-[18.7px] font-normal text-[#b5b5b5]">深证</span>
          0.99%
        </div>
      </div>
      {navItems.map(({ label, width, icon }) => (
        <div key={label} className={clsx('flex flex-col items-center pt-[11px] text-[19.3px] leading-none text-[#b5b5b5]', width)}>
          <svg viewBox="-1 0 40 38" className="h-[38px] w-10" fill="none" stroke="#999" strokeWidth="1.8">
            {icon}
          </svg>
          <span className="mt-[9px]">{label}</span>
        </div>
      ))}
      <div className="ml-[13px] flex w-[139px] flex-col items-center pt-[13px] text-[19.3px] leading-none text-[#b5b5b5]">
        <svg viewBox="0 0 38 32" className="h-8 w-[38px]">
          <path d="M13.200 1C5.900 1 0 5.900 0 12c0 3.500 1.900 6.500 4.900 8.500L3.600 25l5-2.600c1.500.4 3 .6 4.600.6 7.300 0 13.200-4.900 13.200-11S20.500 1 13.200 1z" fill="#62cc43" />
          <path d="M26 11C19.400 11 14.200 15.400 14.200 20.800S19.400 30.500 26 30.500c1.400 0 2.700-.2 4-.5l4.300 2.200-1.100-3.900c2.600-1.800 4.300-4.500 4.300-7.500C37.500 15.400 32.600 11 26 11z" fill="#62cc43" stroke="#1a1a1a" strokeWidth="1.3" />
          <g fill="#1a1a1a">
            <circle cx="9" cy="8.5" r="1.8" />
            <circle cx="18" cy="8.5" r="1.8" />
            <circle cx="22.3" cy="17.5" r="1.5" />
            <circle cx="29.7" cy="17.5" r="1.5" />
          </g>
        </svg>
        <span className="mt-[14px]">分享好友</span>
      </div>
    </div>
    <div className="mt-auto mb-4 ml-[248px] h-2.5 w-[274px] rounded-full bg-white" />
  </footer>
);

export default function App() {
  return (
    <div className={`flex h-[1665px] w-[769px] flex-col overflow-hidden bg-white ${UI}`}>
      <header className="bg-[#f32f37]">
        <StatusBar />
        <TitleBar />
      </header>
      <Quote />
      <News />
      <Tabs />
      <MaRow />
      <main className="flex pl-[7px]">
        <div className="flex w-[483px] flex-col">
          <KLineChart />
          <DateAxis />
          <VolumePanel />
          <div className="mt-[11.3px]">
            <KdjPanel />
          </div>
          <div className="mt-[11.3px]">
            <MacdPanel />
          </div>
        </div>
        <ChipPanel />
      </main>
      <div className="mt-auto h-[7px] bg-[#f4f4f4]" />
      <BottomBar />
    </div>
  );
}
